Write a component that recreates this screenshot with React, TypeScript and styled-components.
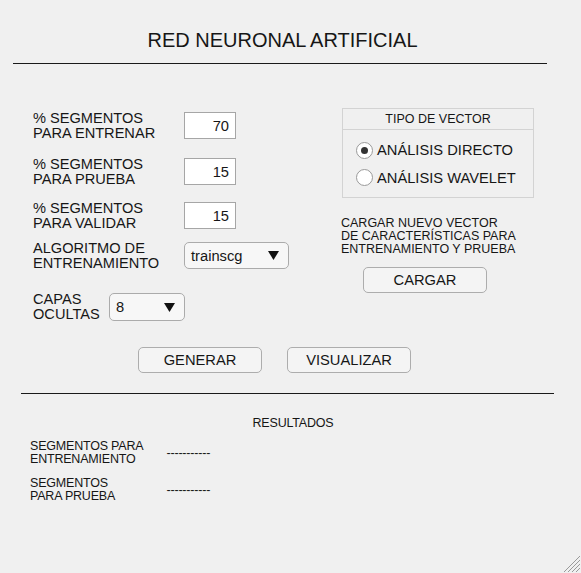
import React from 'react'
import styled, { createGlobalStyle } from 'styled-components'

const GlobalStyle = createGlobalStyle`
    html, body {
        margin: 0;
        padding: 0;
        background: #f0f0f0;
    }
`;

const Figure = styled.div`
    position: relative;
    width: 581px;
    height: 573px;
    overflow: hidden;
    background: #f0f0f0;
    color: #161616;
    font-family: "Liberation Sans", Arial, sans-serif;
    box-sizing: border-box;
    padding-top: 29px;
`;

const Title = styled.div`
    padding-right: 16px;
    text-align: center;
    font-size: 20px;
    line-height: 23px;
`;

const Rule = styled.div<{ $left: number; $width: number; $top: number }>`
    margin-left: ${p => p.$left}px;
    margin-top: ${p => p.$top}px;
    width: ${p => p.$width}px;
    height: 1px;
    background: #1a1a1a;
`;

const Main = styled.div`
    display: flex;
    margin-top: 44px;
    padding-left: 33px;
`;

const LeftColumn = styled.div`
    width: 308px;
    padding-top: 4px;
`;

const FieldRow = styled.div<{ $top: number }>`
    display: flex;
    align-items: flex-start;
    height: 27px;
    margin-top: ${p => p.$top}px;
`;

const Label = styled.div<{ $width: number }>`
    width: ${p => p.$width}px;
    margin-top: -1.5px;
    font-size: 14.6px;
    line-height: 15px;
    white-space: nowrap;
`;

const NumberBox = styled.input`
    box-sizing: border-box;
    width: 52px;
    height: 27px;
    margin: 0;
    padding: 0 6px 0 0;
    border: 1px solid #a6a6a6;
    background: #fff;
    text-align: right;
    font-family: inherit;
    font-size: 14.7px;
    color: #161616;
    outline: none;
`;

const Dropdown = styled.div<{ $width: number; $height: number }>`
    box-sizing: border-box;
    display: flex;
    align-items: center;
    justify-content: space-between;
    width: ${p => p.$width}px;
    height: ${p => p.$height}px;
    padding: 0 9px 0 6px;
    border: 1px solid #ababab;
    border-radius: 5px;
    background: #f7f7f7;
    font-size: 14.7px;
`;

const RightColumn = styled.div`
    display: flex;
    flex-direction: column;
    align-items: flex-start;
`;

const Panel = styled.div`
    box-sizing: border-box;
    width: 192px;
    height: 90px;
    margin-left: 1px;
    border: 1px solid #d3d3d3;
`;

const PanelTitle = styled.div`
    height: 20px;
    border-bottom: 1px solid #d3d3d3;
    text-align: center;
    font-size: 12.5px;
    line-height: 20px;
`;

const RadioList = styled.div`
    display: flex;
    flex-direction: column;
    gap: 11.5px;
    padding: 12px 0 0 13px;
`;

const RadioRow = styled.label`
    display: flex;
    align-items: center;
    gap: 4px;
    height: 16px;
    font-size: 14.7px;
    line-height: 16px;
`;

const RadioCircle = styled.span<{ $checked: boolean }>`
    box-sizing: border-box;
    display: flex;
    align-items: center;
    justify-content: center;
    width: 17px;
    height: 17px;
    border: 1px solid #9a9a9a;
    border-radius: 50%;
    background: #fff;

    &::after {
        content: '';
        display: ${p => (p.$checked ? 'block' : 'none')};
        width: 7px;
        height: 7px;
        border-radius: 50%;
        background: #333;
    }
`;

const Note = styled.div`
    margin-top: 18.5px;
    font-size: 12.5px;
    line-height: 13px;
`;

const PushButton = styled.button<{ $left?: number; $top?: number }>`
    box-sizing: border-box;
    width: 124px;
    height: 26px;
    margin: ${p => p.$top ?? 0}px 0 0 ${p => p.$left ?? 0}px;
    padding: 0;
    border: 1px solid #adadad;
    border-radius: 5px;
    background: #f4f4f4;
    font-family: inherit;
    font-size: 14.7px;
    color: #161616;
`;

const ButtonRow = styled.div`
    display: flex;
    gap: 25px;
    margin-top: 27px;
    padding-left: 138px;
`;

const ResultsTitle = styled.div`
    margin-top: 22.5px;
    padding-left: 5px;
    text-align: center;
    font-size: 12.5px;
    line-height: 13px;
    letter-spacing: -0.2px;
`;

const ResultRow = styled.div<{ $top: number }>`
    display: flex;
    align-items: center;
    margin-top: ${p => p.$top}px;
    padding-left: 30px;
    font-size: 12.5px;
    line-height: 13.3px;
    letter-spacing: -0.2px;
`;

const ResultLabel = styled.div`
    width: 136.5px;
    white-space: nowrap;
`;

const Grip = styled.svg`
    position: absolute;
    right: 1px;
    bottom: 1px;
`;

const Arrow = () => (
    <svg width="11" height="9" viewBox="0 0 11 9">
        <polygon points="0,0 11,0 5.5,9" fill="#111" />
    </svg>
)

const Radio = ({ checked, text }: { checked: boolean; text: string }) => (
    <RadioRow>
        <RadioCircle $checked={checked} />
        {text}
    </RadioRow>
)

export default function App() {
    const fields = [
        { top: 0, label: ['% SEGMENTOS', 'PARA ENTRENAR'], value: '70' },
        { top: 19, label: ['% SEGMENTOS', 'PARA PRUEBA'], value: '15' },
        { top: 17, label: ['% SEGMENTOS', 'PARA VALIDAR'], value: '15' },
    ]

    return (
        <>
            <GlobalStyle />
            <Figure>
                <Title>RED NEURONAL ARTIFICIAL</Title>
                <Rule $left={13} $width={534} $top={11} />

                <Main>
                    <LeftColumn>
                        {fields.map((f, i) => (
                            <FieldRow $top={f.top} key={i}>
                                <Label $width={151}>{f.label[0]}<br />{f.label[1]}</Label>
                                <NumberBox defaultValue={f.value} readOnly />
                            </FieldRow>
                        ))}
                        <FieldRow $top={13}>
                            <Label $width={151}>ALGORITMO DE<br />ENTRENAMIENTO</Label>
                            <Dropdown $width={105} $height={27}>trainscg<Arrow /></Dropdown>
                        </FieldRow>
                        <FieldRow $top={24}>
                            <Label $width={76}>CAPAS<br />OCULTAS</Label>
                            <Dropdown $width={76} $height={28}>8<Arrow /></Dropdown>
                        </FieldRow>
                    </LeftColumn>

                    <RightColumn>
                        <Panel>
                            <PanelTitle>TIPO DE VECTOR</PanelTitle>
                            <RadioList>
                                <Radio checked text="ANÁLISIS DIRECTO" />
                                <Radio checked={false} text="ANÁLISIS WAVELET" />
                            </RadioList>
                        </Panel>
                        <Note>
                            CARGAR NUEVO VECTOR<br />
                            DE CARACTERÍSTICAS PARA<br />
                            ENTRENAMIENTO Y PRUEBA
                        </Note>
                        <PushButton $left={22} $top={11.5}>CARGAR</PushButton>
                    </RightColumn>
                </Main>

                <ButtonRow>
                    <PushButton>GENERAR</PushButton>
                    <PushButton>VISUALIZAR</PushButton>
                </ButtonRow>

                <Rule $left={21} $width={533} $top={20} />

                <ResultsTitle>RESULTADOS</ResultsTitle>
                <ResultRow $top={10.5}>
                    <ResultLabel>SEGMENTOS PARA<br />ENTRENAMIENTO</ResultLabel>
                    <div>-----------</div>
                </ResultRow>
                <ResultRow $top={10.5}>
                    <ResultLabel>SEGMENTOS<br />PARA PRUEBA</ResultLabel>
                    <div>-----------</div>
                </ResultRow>

                <Grip width="18" height="18" viewBox="0 0 18 18">
                    {[4, 8, 12, 16].map(d => (
                        <line key={d} x1={18 - d} y1={18} x2={18} y2={18 - d} stroke="#9a9a9a" strokeWidth="1" />
                    ))}
                </Grip>
            </Figure>
        </>
    )
}
